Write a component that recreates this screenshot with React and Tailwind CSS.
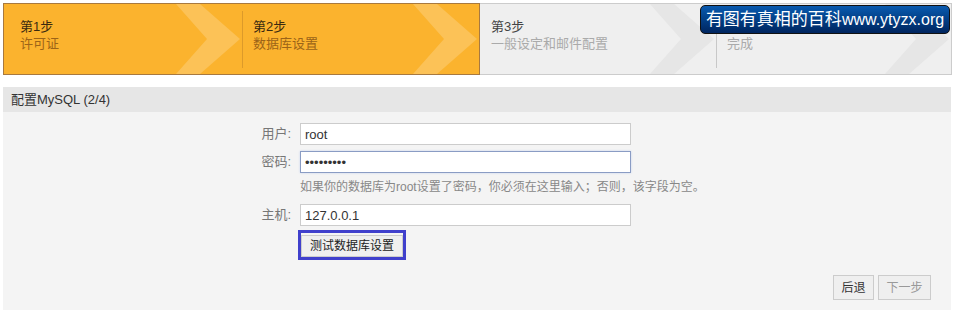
const STEPS = [
    { n: '第1步', label: '许可证', done: true, w: 'w-[238px]' },
    { n: '第2步', label: '数据库设置', done: true, w: 'w-[237px]' },
    { n: '第3步', label: '一般设定和邮件配置', done: false, w: 'w-[236px]' },
    { n: '第4步', label: '完成', done: false, w: 'w-[235px]' },
];

function Chevron({ fill }) {
    return (
        <svg className="absolute right-0 top-0" width="66" height="70" viewBox="0 0 66 70">
            <polygon points="0,0 24,0 64,35 24,70 0,70 31,35" fill={fill} />
        </svg>
    );
}

function Step({ step, first }) {
    const done = step.done;
    return (
        <div className={`relative ${step.w} h-full shrink-0`}>
            <Chevron fill={done ? '#fcc257' : '#e6e6e6'} />
            {!first && (
                <div className={`absolute left-0 top-[7px] bottom-[6px] w-px ${done ? 'bg-[#dc9a2a]' : 'bg-[#c8c8c8]'}`}></div>
            )}
            <div className={`relative pt-[14px] text-[13px] leading-[17px] ${step === STEPS[0] ? 'pl-[16px]' : 'pl-[11px]'}`}>
                <div className={done ? 'text-[#3a2a10]' : 'text-[#444]'}>{step.n}</div>
                <div className={done ? 'text-[#9c6418]' : 'text-[#aaa]'}>{step.label}</div>
            </div>
        </div>
    );
}

function Field({ label, children }) {
    return (
        <div className="flex items-center">
            <label className="w-[297px] pr-[9px] text-right text-[13px] text-[#777]">{label}</label>
            {children}
        </div>
    );
}

export default function App() {
    return (
        <div className="w-[955px] h-[310px] bg-white overflow-hidden relative" style={{ fontFamily: '"Liberation Sans", "Noto Sans CJK SC", sans-serif' }}>
            {/* Stepper */}
            <div className="flex ml-[3px] mt-[3px] w-[949px] h-[72px]">
                <div className="flex border border-[#a8793f] bg-[#fbb32e] h-full">
                    <Step step={STEPS[0]} first />
                    <Step step={STEPS[1]} />
                </div>
                <div className="flex border border-l-0 border-[#cccccc] bg-[#efefef] h-full">
                    <Step step={STEPS[2]} first />
                    <Step step={STEPS[3]} />
                </div>
            </div>

            {/* Watermark badge */}
            <div className="absolute left-[700px] top-[5px] w-[250px] h-[29px] rounded-[5px] border border-[#111] bg-gradient-to-b from-[#0a5bb0] to-[#00255f] text-white flex items-center justify-center text-[17px] leading-none">
                有图有真相的百科<span className="text-[16px]">www.ytyzx.org</span>
            </div>

            {/* Section */}
            <div className="ml-[3px] mt-[12px] w-[948px] h-[230px] bg-[#f4f4f4]">
                <div className="h-[25px] bg-[#e6e6e6] flex items-center pl-[8px] text-[13px] text-[#333]">
                    配置MySQL (2/4)
                </div>
                <div className="pt-[11px] flex flex-col">
                    <Field label="用户:">
                        <input readOnly value="root" className="w-[331px] h-[22px] border border-[#ccc] bg-white px-[4px] text-[13px] text-[#333] outline-none" />
                    </Field>
                    <div className="mt-[6px]">
                        <Field label="密码:">
                            <input readOnly type="password" value="123456789" className="w-[331px] h-[22px] border border-[#8a9cc4] bg-white px-[4px] text-[13px] text-[#333] outline-none shadow-[0_0_2px_#c7d4ee]" />
                        </Field>
                    </div>
                    <div className="ml-[297px] mt-[5px] text-[12px] text-[#888]">
                        如果你的数据库为root设置了密码，你必须在这里输入；否则，该字段为空。
                    </div>
                    <div className="mt-[8px]">
                        <Field label="主机:">
                            <input readOnly value="127.0.0.1" className="w-[331px] h-[22px] border border-[#ccc] bg-white px-[4px] text-[13px] text-[#333] outline-none" />
                        </Field>
                    </div>
                    <div className="ml-[295px] mt-[4px]">
                        <div className="inline-block border-[3px] border-[#4040cc]">
                            <button className="h-[22px] w-[102px] bg-[#efefef] border border-[#ccc] text-[12px] text-[#222]">测试数据库设置</button>
                        </div>
                    </div>
                    <div className="flex justify-end gap-[4px] pr-[20px] mt-[15px]">
                        <button className="h-[25px] w-[41px] bg-[#efefef] border border-[#ccc] text-[12px] text-[#333]">后退</button>
                        <button className="h-[25px] w-[53px] bg-[#efefef] border border-[#ccc] text-[12px] text-[#999]">下一步</button>
                    </div>
                </div>
            </div>
        </div>
    );
}
